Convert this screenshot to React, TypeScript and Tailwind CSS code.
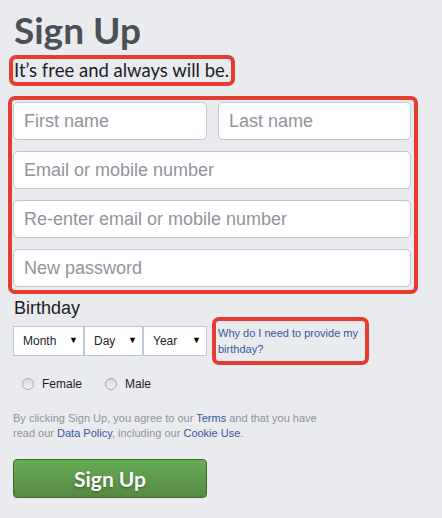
import React from "react";

const arial = { fontFamily: '"Liberation Sans", Arial, sans-serif' };
const lato = { fontFamily: 'Lato, "Open Sans", sans-serif' };

function TextField({ placeholder }: { placeholder: string }) {
    return (
        <input
            type="text"
            placeholder={placeholder}
            className="h-[38px] w-full rounded-[5px] border border-[#bdc7d8] bg-white pl-[10px] text-[18px] text-[#1d2129] outline-none placeholder:text-[#90949c]"
            style={arial}
        />
    );
}

function DateSelect({ label, width }: { label: string; width: string }) {
    return (
        <div
            className={`flex h-[30px] items-center justify-between border border-[#bdc7d8] bg-white pl-[9px] pr-[5px] text-[12px] text-[#1d2129] ${width}`}
        >
            <span>{label}</span>
            <span className="text-[9px] text-black">▼</span>
        </div>
    );
}

function Radio({ label }: { label: string }) {
    return (
        <label className="flex items-center gap-[8px] text-[12px] text-[#1d2129]">
            <span className="h-[12px] w-[12px] rounded-full border border-[#a8a8a8] bg-gradient-to-b from-[#d8d8d8] to-[#f4f4f4]" />
            {label}
        </label>
    );
}

export default function App() {
    return (
        <div className="h-[518px] w-[442px] overflow-hidden bg-[#e9ebee]" style={arial}>
            <div className="pl-[8px] pt-[8px]">
                <h1
                    className="ml-[6px] text-[37px] font-bold leading-[44px] text-[#4b4f56]"
                    style={lato}
                >
                    Sign Up
                </h1>

                <div className="ml-[1px] mt-[3px] inline-block rounded-[7px] border-4 border-[#e43c30] pl-[1px] pr-[2px]">
                    <p className="text-[18.5px] leading-[23px] text-[#1d2129]" style={lato}>
                        It’s free and always will be.
                    </p>
                </div>

                <div className="mt-[10px] w-[410px] rounded-[7px] border-4 border-[#e43c30] pb-[3px] pl-[1px] pr-[3px] pt-[2px]">
                    <div className="flex flex-col gap-[11px]">
                        <div className="flex gap-[11px]">
                            <div className="w-[194px]">
                                <TextField placeholder="First name" />
                            </div>
                            <div className="flex-1">
                                <TextField placeholder="Last name" />
                            </div>
                        </div>
                        <TextField placeholder="Email or mobile number" />
                        <TextField placeholder="Re-enter email or mobile number" />
                        <TextField placeholder="New password" />
                    </div>
                </div>

                <div className="ml-[6px] mt-[6px] text-[18px] leading-[17px] text-[#1d2129]">
                    Birthday
                </div>

                <div className="ml-[5px] flex items-center">
                    <DateSelect label="Month" width="w-[71px]" />
                    <DateSelect label="Day" width="w-[59px]" />
                    <DateSelect label="Year" width="w-[64px]" />
                    <div className="ml-[5px] w-[157px] rounded-[7px] border-4 border-[#e43c30] py-[4px] pl-[2px]">
                        <a href="#" className="block text-[11px] leading-[16px] text-[#365899]">
                            Why do I need to provide my birthday?
                        </a>
                    </div>
                </div>

                <div className="ml-[14px] mt-[10px] flex gap-[23px]">
                    <Radio label="Female" />
                    <Radio label="Male" />
                </div>

                <p className="ml-[5px] mt-[18px] w-[320px] text-[11px] leading-[15px] text-[#90949c]">
                    By clicking Sign Up, you agree to our{" "}
                    <a href="#" className="text-[#365899]">Terms</a> and that you have read our{" "}
                    <a href="#" className="text-[#365899]">Data Policy</a>, including our{" "}
                    <a href="#" className="text-[#365899]">Cookie Use</a>.
                </p>

                <button
                    className="ml-[5px] mt-[18px] h-[39px] w-[194px] rounded-[4px] border border-[#3b6e22] bg-gradient-to-b from-[#67ae55] to-[#578843] text-[21px] font-bold text-white [text-shadow:0_1px_2px_rgba(0,0,0,0.4)]"
                    style={lato}
                >
                    Sign Up
                </button>
            </div>
        </div>
    );
}
